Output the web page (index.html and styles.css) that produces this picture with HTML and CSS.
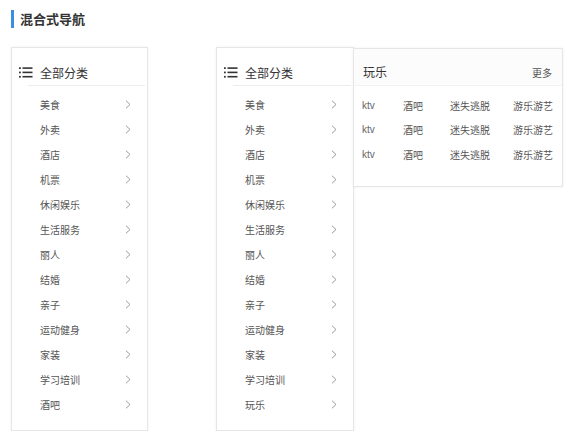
FILE: index.html
```html
<!DOCTYPE html>
<html lang="zh">
<head>
<meta charset="utf-8">
<link rel="stylesheet" href="styles.css">
</head>
<body>
<div class="page">
  <h1 class="title">混合式导航</h1>
  <div class="demos">
    <div class="panel">
      <div class="panel-head">
        <svg class="menu-icon" width="14" height="11" viewBox="0 0 14 11"><g fill="#333"><rect x="0" y="0.3" width="1.8" height="1.7"/><rect x="0" y="4.6" width="1.8" height="1.7"/><rect x="0" y="8.9" width="1.8" height="1.7"/><rect x="3.5" y="0.3" width="10" height="1.6"/><rect x="3.5" y="4.6" width="10" height="1.6"/><rect x="3.5" y="8.9" width="10" height="1.6"/></g></svg>
        <span class="head-text">全部分类</span>
      </div>
      <ul class="list">
        <li class="item"><span>美食</span><svg class="chev" width="6" height="9" viewBox="0 0 6 9"><path d="M1 0.7L5 4.5L1 8.3" fill="none" stroke="#9a9a9a" stroke-width="1"/></svg></li>
        <li class="item"><span>外卖</span><svg class="chev" width="6" height="9" viewBox="0 0 6 9"><path d="M1 0.7L5 4.5L1 8.3" fill="none" stroke="#9a9a9a" stroke-width="1"/></svg></li>
        <li class="item"><span>酒店</span><svg class="chev" width="6" height="9" viewBox="0 0 6 9"><path d="M1 0.7L5 4.5L1 8.3" fill="none" stroke="#9a9a9a" stroke-width="1"/></svg></li>
        <li class="item"><span>机票</span><svg class="chev" width="6" height="9" viewBox="0 0 6 9"><path d="M1 0.7L5 4.5L1 8.3" fill="none" stroke="#9a9a9a" stroke-width="1"/></svg></li>
        <li class="item"><span>休闲娱乐</span><svg class="chev" width="6" height="9" viewBox="0 0 6 9"><path d="M1 0.7L5 4.5L1 8.3" fill="none" stroke="#9a9a9a" stroke-width="1"/></svg></li>
        <li class="item"><span>生活服务</span><svg class="chev" width="6" height="9" viewBox="0 0 6 9"><path d="M1 0.7L5 4.5L1 8.3" fill="none" stroke="#9a9a9a" stroke-width="1"/></svg></li>
        <li class="item"><span>丽人</span><svg class="chev" width="6" height="9" viewBox="0 0 6 9"><path d="M1 0.7L5 4.5L1 8.3" fill="none" stroke="#9a9a9a" stroke-width="1"/></svg></li>
        <li class="item"><span>结婚</span><svg class="chev" width="6" height="9" viewBox="0 0 6 9"><path d="M1 0.7L5 4.5L1 8.3" fill="none" stroke="#9a9a9a" stroke-width="1"/></svg></li>
        <li class="item"><span>亲子</span><svg class="chev" width="6" height="9" viewBox="0 0 6 9"><path d="M1 0.7L5 4.5L1 8.3" fill="none" stroke="#9a9a9a" stroke-width="1"/></svg></li>
        <li class="item"><span>运动健身</span><svg class="chev" width="6" height="9" viewBox="0 0 6 9"><path d="M1 0.7L5 4.5L1 8.3" fill="none" stroke="#9a9a9a" stroke-width="1"/></svg></li>
        <li class="item"><span>家装</span><svg class="chev" width="6" height="9" viewBox="0 0 6 9"><path d="M1 0.7L5 4.5L1 8.3" fill="none" stroke="#9a9a9a" stroke-width="1"/></svg></li>
        <li class="item"><span>学习培训</span><svg class="chev" width="6" height="9" viewBox="0 0 6 9"><path d="M1 0.7L5 4.5L1 8.3" fill="none" stroke="#9a9a9a" stroke-width="1"/></svg></li>
        <li class="item"><span>酒吧</span><svg class="chev" width="6" height="9" viewBox="0 0 6 9"><path d="M1 0.7L5 4.5L1 8.3" fill="none" stroke="#9a9a9a" stroke-width="1"/></svg></li>
      </ul>
    </div>

    <div class="combo">
      <div class="panel panel-b">
        <div class="panel-head">
          <svg class="menu-icon" width="14" height="11" viewBox="0 0 14 11"><g fill="#333"><rect x="0" y="0.3" width="1.8" height="1.7"/><rect x="0" y="4.6" width="1.8" height="1.7"/><rect x="0" y="8.9" width="1.8" height="1.7"/><rect x="3.5" y="0.3" width="10" height="1.6"/><rect x="3.5" y="4.6" width="10" height="1.6"/><rect x="3.5" y="8.9" width="10" height="1.6"/></g></svg>
          <span class="head-text">全部分类</span>
        </div>
        <ul class="list">
          <li class="item"><span>美食</span><svg class="chev" width="6" height="9" viewBox="0 0 6 9"><path d="M1 0.7L5 4.5L1 8.3" fill="none" stroke="#9a9a9a" stroke-width="1"/></svg></li>
          <li class="item"><span>外卖</span><svg class="chev" width="6" height="9" viewBox="0 0 6 9"><path d="M1 0.7L5 4.5L1 8.3" fill="none" stroke="#9a9a9a" stroke-width="1"/></svg></li>
          <li class="item"><span>酒店</span><svg class="chev" width="6" height="9" viewBox="0 0 6 9"><path d="M1 0.7L5 4.5L1 8.3" fill="none" stroke="#9a9a9a" stroke-width="1"/></svg></li>
          <li class="item"><span>机票</span><svg class="chev" width="6" height="9" viewBox="0 0 6 9"><path d="M1 0.7L5 4.5L1 8.3" fill="none" stroke="#9a9a9a" stroke-width="1"/></svg></li>
          <li class="item"><span>休闲娱乐</span><svg class="chev" width="6" height="9" viewBox="0 0 6 9"><path d="M1 0.7L5 4.5L1 8.3" fill="none" stroke="#9a9a9a" stroke-width="1"/></svg></li>
          <li class="item"><span>生活服务</span><svg class="chev" width="6" height="9" viewBox="0 0 6 9"><path d="M1 0.7L5 4.5L1 8.3" fill="none" stroke="#9a9a9a" stroke-width="1"/></svg></li>
          <li class="item"><span>丽人</span><svg class="chev" width="6" height="9" viewBox="0 0 6 9"><path d="M1 0.7L5 4.5L1 8.3" fill="none" stroke="#9a9a9a" stroke-width="1"/></svg></li>
          <li class="item"><span>结婚</span><svg class="chev" width="6" height="9" viewBox="0 0 6 9"><path d="M1 0.7L5 4.5L1 8.3" fill="none" stroke="#9a9a9a" stroke-width="1"/></svg></li>
          <li class="item"><span>亲子</span><svg class="chev" width="6" height="9" viewBox="0 0 6 9"><path d="M1 0.7L5 4.5L1 8.3" fill="none" stroke="#9a9a9a" stroke-width="1"/></svg></li>
          <li class="item"><span>运动健身</span><svg class="chev" width="6" height="9" viewBox="0 0 6 9"><path d="M1 0.7L5 4.5L1 8.3" fill="none" stroke="#9a9a9a" stroke-width="1"/></svg></li>
          <li class="item"><span>家装</span><svg class="chev" width="6" height="9" viewBox="0 0 6 9"><path d="M1 0.7L5 4.5L1 8.3" fill="none" stroke="#9a9a9a" stroke-width="1"/></svg></li>
          <li class="item"><span>学习培训</span><svg class="chev" width="6" height="9" viewBox="0 0 6 9"><path d="M1 0.7L5 4.5L1 8.3" fill="none" stroke="#9a9a9a" stroke-width="1"/></svg></li>
          <li class="item"><span>玩乐</span><svg class="chev" width="6" height="9" viewBox="0 0 6 9"><path d="M1 0.7L5 4.5L1 8.3" fill="none" stroke="#9a9a9a" stroke-width="1"/></svg></li>
        </ul>
      </div>
      <div class="popup">
        <div class="popup-head">
          <span class="popup-title">玩乐</span>
          <span class="more">更多</span>
        </div>
        <div class="grid">
          <span class="latin">ktv</span><span>酒吧</span><span>迷失逃脱</span><span>游乐游艺</span>
          <span class="latin">ktv</span><span>酒吧</span><span>迷失逃脱</span><span>游乐游艺</span>
          <span class="latin">ktv</span><span>酒吧</span><span>迷失逃脱</span><span>游乐游艺</span>
        </div>
      </div>
    </div>
  </div>
</div>
</body>
</html>
```

FILE: styles.css
```css
* { box-sizing: border-box; }
html, body { margin: 0; padding: 0; background: #fff; }
body {
  font-family: "Noto Sans CJK SC", "Noto Sans", sans-serif;
  color: #555;
}
.page { padding: 10px 0 0 11px; }
.title {
  margin: 0;
  height: 18px;
  line-height: 18px;
  font-size: 13px;
  font-weight: bold;
  color: #333;
  border-left: 3px solid #3b8ee3;
  padding-left: 6px;
}
.demos {
  display: flex;
  align-items: flex-start;
  gap: 68px;
  margin-top: 19px;
}
.panel {
  width: 137px;
  border: 1px solid #e6e6e6;
  box-shadow: 0 0 3px rgba(0,0,0,0.06);
  background: #fff;
}
.panel-b { width: 138px; }
.panel-head {
  display: flex;
  align-items: center;
  height: 38px;
  padding: 15px 0 3px 7px;
  margin-right: 2px;
  border-bottom: 1px solid #ececec;
  position: relative;
}
.panel-head::after {
  content: "";
  position: absolute;
  left: 0;
  bottom: -1px;
  width: 16px;
  height: 1px;
  background: #fff;
}
.menu-icon { display: block; flex: none; }
.head-text {
  margin-left: 7px;
  font-size: 12px;
  color: #333;
  line-height: 18px;
}
.list {
  list-style: none;
  margin: 0;
  padding: 6px 0 13px 0;
}
.item {
  display: flex;
  align-items: center;
  justify-content: space-between;
  height: 25px;
  padding: 0 16px 0 28px;
  font-size: 10px;
  color: #555;
}
.chev { display: block; }
.combo {
  display: flex;
  align-items: flex-start;
}
.popup {
  width: 210px;
  margin-left: -1px;
  margin-top: 1px;
  border: 1px solid #e6e6e6;
  box-shadow: 0 0 3px rgba(0,0,0,0.06);
  background: #fff;
}
.popup-head {
  display: flex;
  align-items: baseline;
  justify-content: space-between;
  height: 37px;
  padding: 14px 10px 0 9px;
  background: #fcfcfc;
  border-bottom: 1px solid #f2f2f2;
}
.popup-title { font-size: 12px; color: #333; line-height: 18px; }
.more { font-size: 10px; color: #555; }
.grid {
  display: grid;
  grid-template-columns: 41px 47px 63px auto;
  grid-auto-rows: 24.5px;
  align-items: center;
  padding: 7px 0 19px 8px;
  font-size: 10px;
  color: #555;
}
.latin { font-family: "Liberation Sans", sans-serif; color: #666; }
```
